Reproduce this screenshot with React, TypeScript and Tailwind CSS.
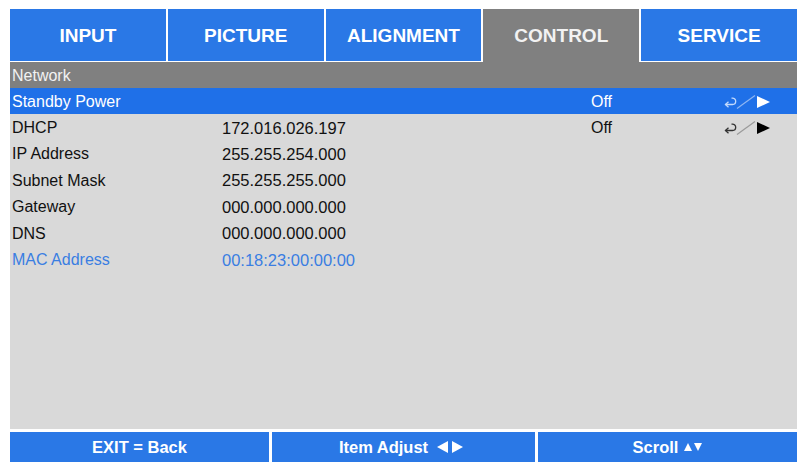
import React from "react";

const tabs = ["INPUT", "PICTURE", "ALIGNMENT", "CONTROL", "SERVICE"];

function AdjustIcon({ selected }: { selected: boolean }) {
  const arrow = selected ? "#c4dafc" : "#333333";
  const slash = selected ? "#8fb6f2" : "#9a9a9a";
  const tri = selected ? "#ffffff" : "#000000";
  return (
    <svg width="48" height="14" viewBox="0 0 48 14" className="block">
      <path d="M1.5 9.5 H8.5 A3.2 3.2 0 0 0 8.5 3.1 H7.5" fill="none" stroke={arrow} strokeWidth="1.3" />
      <path d="M4.5 6.8 L1.5 9.5 L4.5 12.2" fill="none" stroke={arrow} strokeWidth="1.3" />
      <line x1="13" y1="13.5" x2="31" y2="0.5" stroke={slash} strokeWidth="1.2" />
      <polygon points="33,1 46,7 33,13" fill={tri} />
    </svg>
  );
}

type Row = { label: string; value?: string; off?: boolean; selected?: boolean; blue?: boolean };

const rows: Row[] = [
  { label: "Standby Power", off: true, selected: true },
  { label: "DHCP", value: "172.016.026.197", off: true },
  { label: "IP Address", value: "255.255.254.000" },
  { label: "Subnet Mask", value: "255.255.255.000" },
  { label: "Gateway", value: "000.000.000.000" },
  { label: "DNS", value: "000.000.000.000" },
  { label: "MAC Address", value: "00:18:23:00:00:00", blue: true },
];

export default function App() {
  return (
    <div
      className="w-[807px] h-[472px] bg-white pt-[9px] px-[10px] flex flex-col"
      style={{ fontFamily: '"Liberation Sans", Arial, sans-serif' }}
    >
      <div className="flex gap-[2px] h-[53px] items-start">
        {tabs.map((t) =>
          t === "CONTROL" ? (
            <div
              key={t}
              className="flex-1 h-[53px] bg-[#808080] text-[#f2f2f2] font-bold text-[19px] flex items-start justify-center pt-[17px] leading-none"
            >
              {t}
            </div>
          ) : (
            <div
              key={t}
              className="flex-1 h-[51.5px] bg-[#2a78e6] text-white font-bold text-[19px] flex items-start justify-center pt-[17px] leading-none"
            >
              {t}
            </div>
          )
        )}
      </div>
      <div className="h-[367px] bg-[#d9d9d9] flex flex-col">
        <div className="h-[26px] bg-[#808080] text-[#f2f2f2] text-[16px] flex items-center pl-[2px] pt-[1px]">
          Network
        </div>
        {rows.map((r) => (
          <div
            key={r.label}
            className={
              "h-[26.4px] flex items-center pl-[2px] pt-[1px] text-[16px] " +
              (r.selected ? "bg-[#1f70e8] text-white" : r.blue ? "text-[#3a7ee2]" : "text-[#111111]")
            }
          >
            <div className="w-[210px] shrink-0">{r.label}</div>
            <div className="w-[369px] shrink-0 text-[16.5px]">{r.value ?? ""}</div>
            <div className="w-[133px] shrink-0">{r.off ? "Off" : ""}</div>
            <div className="w-[50px] shrink-0">{r.off ? <AdjustIcon selected={!!r.selected} /> : null}</div>
          </div>
        ))}
      </div>
      <div className="h-[3px]" />
      <div className="flex gap-[3px] h-[30px]">
        <div className="flex-1 bg-[#2a78e6] text-white font-bold text-[16.5px] flex items-center justify-center">
          EXIT = Back
        </div>
        <div className="flex-1 bg-[#2a78e6] text-white font-bold text-[16.5px] flex items-center justify-center gap-[8px] pr-[4px]">
          <span>Item Adjust</span>
          <svg width="28" height="12" viewBox="0 0 28 12" className="block">
            <polygon points="12,0 12,12 1,6" fill="#ffffff" />
            <polygon points="16,0 16,12 27,6" fill="#ffffff" />
          </svg>
        </div>
        <div className="flex-1 bg-[#2a78e6] text-white font-bold text-[16.5px] flex items-center justify-center gap-[6px]">
          <span>Scroll</span>
          <svg width="18" height="10" viewBox="0 0 18 10" className="block">
            <polygon points="4,1 8,9 0,9" fill="#ffffff" />
            <polygon points="10,1 18,1 14,9" fill="#ffffff" />
          </svg>
        </div>
      </div>
    </div>
  );
}
